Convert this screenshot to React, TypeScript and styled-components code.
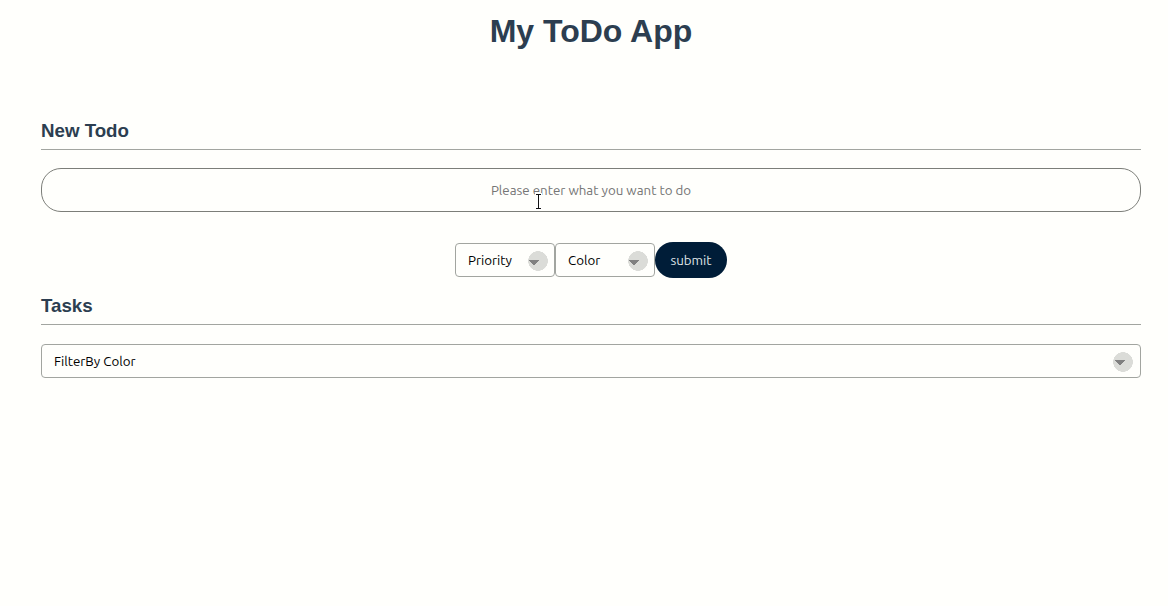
import { useState } from "react";
import type { FormEvent } from "react";
import styled, { createGlobalStyle } from "styled-components";

const GlobalStyle = createGlobalStyle`
  *, *::before, *::after { box-sizing: border-box; }
  body {
    margin: 0;
    background: #fffffc;
    color: #2c3e50;
    font-family: "Liberation Sans", Helvetica, Arial, sans-serif;
  }
`;

const uiFont = `Ubuntu, "Noto Sans", sans-serif`;

const Page = styled.main`
  padding: 12px 27px 32px 41px;
`;

const Title = styled.h1`
  margin: 0 0 70px;
  font-size: 32px;
  line-height: 38px;
  text-align: center;
`;

const SectionTitle = styled.h3`
  margin: 0 0 19px;
  padding-bottom: 7px;
  line-height: 22px;
  border-bottom: 1px solid #a2a5a0;
`;

const Form = styled.form`
  display: flex;
  flex-direction: column;
  gap: 30px;
  margin: -1px 0 17px;
`;

const Field = styled.div`
  position: relative;
`;

const TextBox = styled.input`
  display: block;
  width: 100%;
  height: 44px;
  padding: 0 16px;
  border: 1px solid #7c7e79;
  border-radius: 20px;
  background: transparent;
  color: #000;
  font-family: ${uiFont};
  text-align: center;
  &::placeholder { color: #757575; opacity: 1; }
`;

const Cursor = styled.svg`
  position: absolute;
  left: calc(50% - 57px);
  top: 25px;
  pointer-events: none;
`;

const Controls = styled.div`
  display: flex;
  justify-content: center;
  align-items: center;
`;

const Select = styled.select<{ $wide?: boolean }>`
  display: block;
  appearance: none;
  width: ${(p) => (p.$wide ? "100%" : "100px")};
  height: 34px;
  padding: 0 32px 0 12px;
  border: 1px solid #a2a5a0;
  border-radius: 4px;
  color: #000;
  font-family: ${uiFont};
  background-color: transparent;
  background-image:
    linear-gradient(45deg, transparent 49%, #808080 50%),
    linear-gradient(135deg, #808080 50%, transparent 51%),
    radial-gradient(circle closest-side, #dbdcd8 96%, transparent 100%);
  background-position:
    right 20px top ${(p) => (p.$wide ? 15 : 16)}px,
    right 15px top ${(p) => (p.$wide ? 15 : 16)}px,
    right ${(p) => (p.$wide ? 7 : 6)}px top 7px;
  background-size: 5px 5px, 5px 5px, 20px 20px;
  background-repeat: no-repeat;
`;

const Submit = styled.button`
  width: 72px;
  height: 36px;
  padding: 0;
  border: 0;
  border-radius: 18px;
  background: #001d38;
  color: #dfe3e6;
  font-family: ${uiFont};
`;

export default function App() {
  const [text, setText] = useState("");
  const submit = (e: FormEvent) => {
    e.preventDefault();
    setText("");
  };

  return (
    <>
      <GlobalStyle />
      <Page>
        <Title>My ToDo App</Title>
        <section>
          <SectionTitle>New Todo</SectionTitle>
          <Form onSubmit={submit}>
            <Field>
              <TextBox
                type="text"
                aria-label="New todo"
                placeholder="Please enter what you want to do"
                value={text}
                onChange={(e) => setText(e.target.value)}
              />
              <Cursor width="9" height="17" viewBox="0 0 9 17" fill="none" aria-hidden="true">
                <path d="M1 1.5h7M4.5 2v13M1 15.5h7" stroke="#fff" strokeWidth="3" />
                <path d="M2 1.5h5M4.5 1.5v14M2 15.5h5" stroke="#111" />
              </Cursor>
            </Field>
            <Controls>
              <Select aria-label="Priority" defaultValue="">
                <option value="">Priority</option>
                <option>High</option>
                <option>Low</option>
              </Select>
              <Select aria-label="Color" defaultValue="">
                <option value="">Color</option>
                <option>Red</option>
                <option>Blue</option>
              </Select>
              <Submit type="submit">submit</Submit>
            </Controls>
          </Form>
        </section>
        <section>
          <SectionTitle>Tasks</SectionTitle>
          <Select $wide aria-label="Filter by color" defaultValue="">
            <option value="">FilterBy Color</option>
            <option>Red</option>
            <option>Blue</option>
          </Select>
        </section>
      </Page>
    </>
  );
}
